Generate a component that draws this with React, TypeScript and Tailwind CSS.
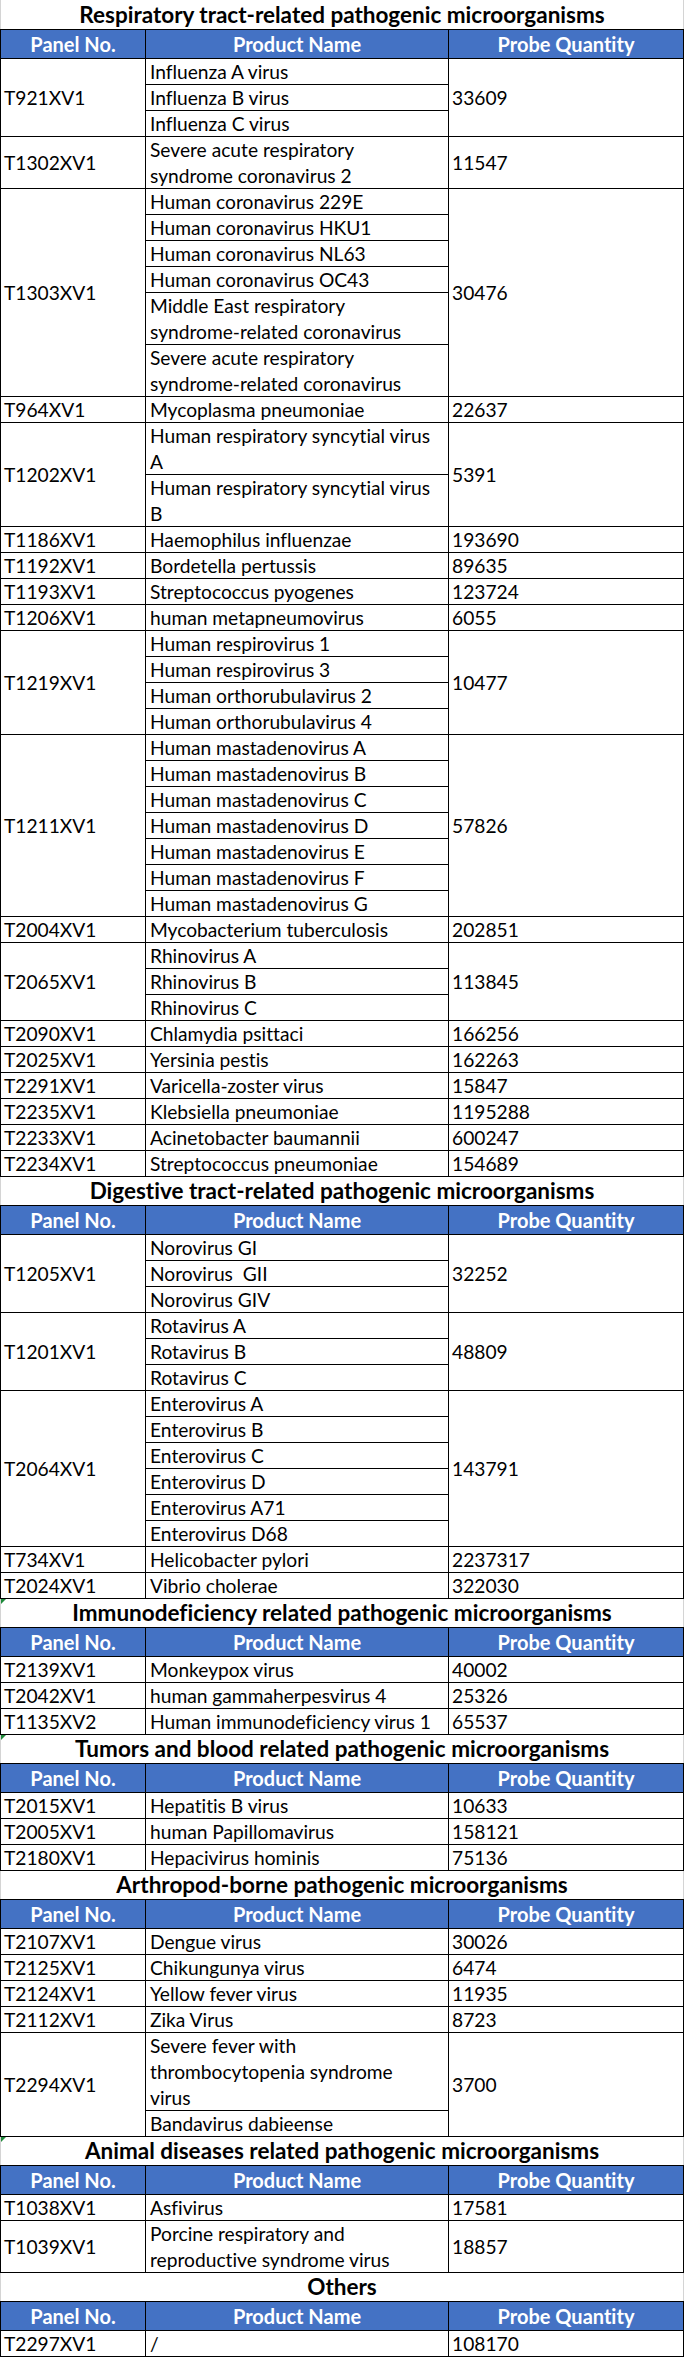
import React from 'react';

type Item = string | string[];
type Group = { panel: string; items: Item[]; qty: string };
type Section = { title: string; mark?: boolean; groups: Group[] };

const sections: Section[] = [
  {
    title: 'Respiratory tract-related pathogenic microorganisms',
    groups: [
      { panel: 'T921XV1', items: ['Influenza A virus', 'Influenza B virus', 'Influenza C virus'], qty: '33609' },
      { panel: 'T1302XV1', items: [['Severe acute respiratory', 'syndrome coronavirus 2']], qty: '11547' },
      {
        panel: 'T1303XV1',
        items: [
          'Human coronavirus 229E',
          'Human coronavirus HKU1',
          'Human coronavirus NL63',
          'Human coronavirus OC43',
          ['Middle East respiratory', 'syndrome-related coronavirus'],
          ['Severe acute respiratory', 'syndrome-related coronavirus'],
        ],
        qty: '30476',
      },
      { panel: 'T964XV1', items: ['Mycoplasma pneumoniae'], qty: '22637' },
      {
        panel: 'T1202XV1',
        items: [
          ['Human respiratory syncytial virus', 'A'],
          ['Human respiratory syncytial virus', 'B'],
        ],
        qty: '5391',
      },
      { panel: 'T1186XV1', items: ['Haemophilus influenzae'], qty: '193690' },
      { panel: 'T1192XV1', items: ['Bordetella pertussis'], qty: '89635' },
      { panel: 'T1193XV1', items: ['Streptococcus pyogenes'], qty: '123724' },
      { panel: 'T1206XV1', items: ['human metapneumovirus'], qty: '6055' },
      {
        panel: 'T1219XV1',
        items: ['Human respirovirus 1', 'Human respirovirus 3', 'Human orthorubulavirus 2', 'Human orthorubulavirus 4'],
        qty: '10477',
      },
      {
        panel: 'T1211XV1',
        items: [
          'Human mastadenovirus A',
          'Human mastadenovirus B',
          'Human mastadenovirus C',
          'Human mastadenovirus D',
          'Human mastadenovirus E',
          'Human mastadenovirus F',
          'Human mastadenovirus G',
        ],
        qty: '57826',
      },
      { panel: 'T2004XV1', items: ['Mycobacterium tuberculosis'], qty: '202851' },
      { panel: 'T2065XV1', items: ['Rhinovirus A', 'Rhinovirus B', 'Rhinovirus C'], qty: '113845' },
      { panel: 'T2090XV1', items: ['Chlamydia psittaci'], qty: '166256' },
      { panel: 'T2025XV1', items: ['Yersinia pestis'], qty: '162263' },
      { panel: 'T2291XV1', items: ['Varicella-zoster virus'], qty: '15847' },
      { panel: 'T2235XV1', items: ['Klebsiella pneumoniae'], qty: '1195288' },
      { panel: 'T2233XV1', items: ['Acinetobacter baumannii'], qty: '600247' },
      { panel: 'T2234XV1', items: ['Streptococcus pneumoniae'], qty: '154689' },
    ],
  },
  {
    title: 'Digestive tract-related pathogenic microorganisms',
    groups: [
      { panel: 'T1205XV1', items: ['Norovirus GI', 'Norovirus\u00a0 GII', 'Norovirus GIV'], qty: '32252' },
      { panel: 'T1201XV1', items: ['Rotavirus A', 'Rotavirus B', 'Rotavirus C'], qty: '48809' },
      {
        panel: 'T2064XV1',
        items: ['Enterovirus A', 'Enterovirus B', 'Enterovirus C', 'Enterovirus D', 'Enterovirus A71', 'Enterovirus D68'],
        qty: '143791',
      },
      { panel: 'T734XV1', items: ['Helicobacter pylori'], qty: '2237317' },
      { panel: 'T2024XV1', items: ['Vibrio cholerae'], qty: '322030' },
    ],
  },
  {
    title: 'Immunodeficiency related pathogenic microorganisms',
    mark: true,
    groups: [
      { panel: 'T2139XV1', items: ['Monkeypox virus'], qty: '40002' },
      { panel: 'T2042XV1', items: ['human gammaherpesvirus 4'], qty: '25326' },
      { panel: 'T1135XV2', items: ['Human immunodeficiency virus 1'], qty: '65537' },
    ],
  },
  {
    title: 'Tumors and blood related pathogenic microorganisms',
    mark: true,
    groups: [
      { panel: 'T2015XV1', items: ['Hepatitis B virus'], qty: '10633' },
      { panel: 'T2005XV1', items: ['human Papillomavirus'], qty: '158121' },
      { panel: 'T2180XV1', items: ['Hepacivirus hominis'], qty: '75136' },
    ],
  },
  {
    title: 'Arthropod-borne pathogenic microorganisms',
    groups: [
      { panel: 'T2107XV1', items: ['Dengue virus'], qty: '30026' },
      { panel: 'T2125XV1', items: ['Chikungunya virus'], qty: '6474' },
      { panel: 'T2124XV1', items: ['Yellow fever virus'], qty: '11935' },
      { panel: 'T2112XV1', items: ['Zika Virus'], qty: '8723' },
      {
        panel: 'T2294XV1',
        items: [['Severe fever with', 'thrombocytopenia syndrome', 'virus'], 'Bandavirus dabieense'],
        qty: '3700',
      },
    ],
  },
  {
    title: 'Animal diseases related pathogenic microorganisms',
    mark: true,
    groups: [
      { panel: 'T1038XV1', items: ['Asfivirus'], qty: '17581' },
      { panel: 'T1039XV1', items: [['Porcine respiratory and', 'reproductive syndrome virus']], qty: '18857' },
    ],
  },
  {
    title: 'Others',
    groups: [{ panel: 'T2297XV1', items: ['/'], qty: '108170' }],
  },
];

const heights: Record<number, string> = {
  1: 'h-[25px]',
  2: 'h-[51px]',
  3: 'h-[77px]',
};

const cols = 'grid grid-cols-[144px_302px_234px] gap-px';

const GroupRow = ({ group }: { group: Group }) => (
  <div className={cols}>
    <div className="bg-white flex items-center pl-[3px] min-h-0">{group.panel}</div>
    <div className="flex flex-col gap-px">
      {group.items.map((item, i) => {
        const lines = Array.isArray(item) ? item : [item];
        return (
          <div
            key={i}
            className={`bg-white flex flex-col justify-center pl-[4px] overflow-visible ${heights[lines.length]}`}
          >
            {lines.map((l, j) => (
              <span key={j} className="whitespace-pre leading-[26px] h-[26px] shrink-0">
                {l}
              </span>
            ))}
          </div>
        );
      })}
    </div>
    <div className="bg-white flex items-center pl-[3px] min-h-0">{group.qty}</div>
  </div>
);

const TableSection = ({ section, first }: { section: Section; first: boolean }) => (
  <div>
    <div
      className={`relative flex items-center justify-center border-x border-[#d4d4d4] font-bold text-[22.5px] leading-[28px] text-black ${
        first ? 'h-[29px]' : 'h-[28px]'
      }`}
    >
      {section.mark && (
        <span className="absolute left-0 top-0 w-0 h-0 border-t-[5px] border-r-[5px] border-t-[#1e8a3a] border-r-transparent" />
      )}
      {section.title}
    </div>
    <div className="bg-black p-px flex flex-col gap-px">
      <div className={cols}>
        {['Panel No.', 'Product Name', 'Probe Quantity'].map((h) => (
          <div
            key={h}
            className="h-[28px] bg-[#4472c4] text-white font-bold text-[20px] leading-[28px] flex items-center justify-center"
          >
            {h}
          </div>
        ))}
      </div>
      {section.groups.map((g) => (
        <GroupRow key={g.panel} group={g} />
      ))}
    </div>
  </div>
);

export default function App() {
  return (
    <div className="w-[685px] h-[2358px] overflow-hidden bg-white font-['Lato','Noto_Sans',sans-serif] text-[19.2px] leading-[25px] text-black [font-variant-ligatures:none]">
      <div className="w-[684px]">
        {sections.map((s, i) => (
          <TableSection key={s.title} section={s} first={i === 0} />
        ))}
      </div>
    </div>
  );
}
